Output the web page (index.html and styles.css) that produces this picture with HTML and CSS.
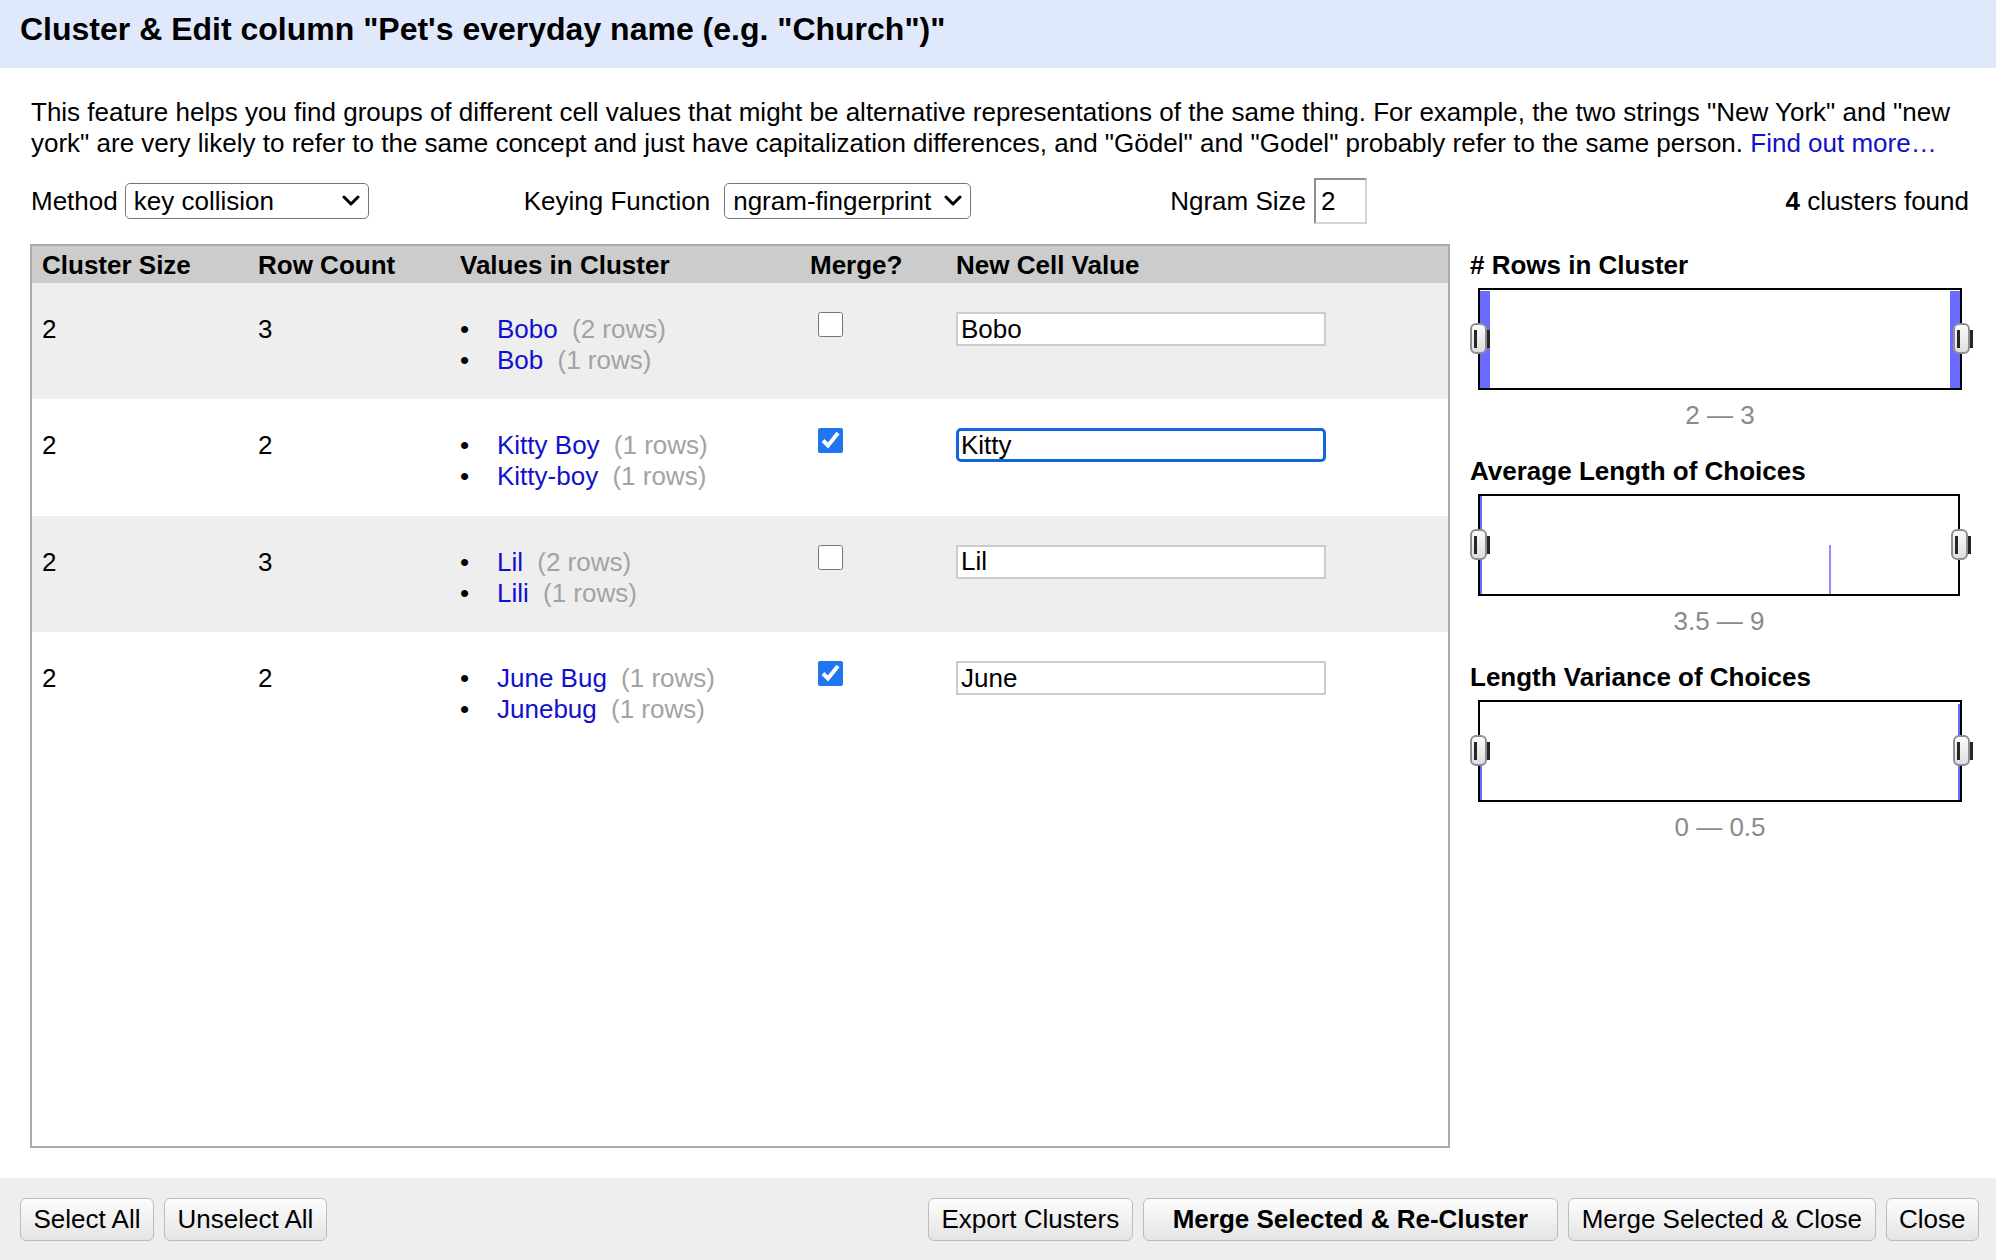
FILE: index.html
```html
<!DOCTYPE html>
<html lang="en">
<head>
<meta charset="utf-8">
<title>Cluster &amp; Edit</title>
<link rel="stylesheet" href="styles.css">
</head>
<body>
<div class="dialog">
  <header class="dlg-header">
    <h1 class="dlg-title">Cluster &amp; Edit column "Pet's everyday name (e.g. "Church")"</h1>
  </header>

  <main class="dlg-body">
    <p class="intro">This feature helps you find groups of different cell values that might be alternative representations of the same thing. For example, the two strings "New York" and "new york" are very likely to refer to the same concept and just have capitalization differences, and "Gödel" and "Godel" probably refer to the same person. <a class="link" href="#">Find out more…</a></p>

    <div class="controls">
      <div class="ctl ctl-method">
        <span class="ctl-label">Method</span>
        <span class="select-wrap">
          <select class="select select-method"><option>key collision</option></select>
          <svg class="chevron" width="18" height="12" viewBox="0 0 18 12"><path d="M2 2 L9 9 L16 2" fill="none" stroke="#000" stroke-width="3" stroke-linecap="round" stroke-linejoin="round"/></svg>
        </span>
      </div>
      <div class="ctl ctl-keying">
        <span class="ctl-label">Keying Function</span>
        <span class="select-wrap">
          <select class="select select-keying"><option>ngram-fingerprint</option></select>
          <svg class="chevron" width="18" height="12" viewBox="0 0 18 12"><path d="M2 2 L9 9 L16 2" fill="none" stroke="#000" stroke-width="3" stroke-linecap="round" stroke-linejoin="round"/></svg>
        </span>
      </div>
      <div class="ctl ctl-ngram">
        <span class="ctl-label">Ngram Size</span>
        <input class="ngram-input" type="text" value="2">
      </div>
      <div class="found"><b>4</b> clusters found</div>
    </div>

    <div class="workspace">
      <div class="table-box">
        <div class="trow thead">
          <div class="cell">Cluster Size</div>
          <div class="cell">Row Count</div>
          <div class="cell">Values in Cluster</div>
          <div class="cell">Merge?</div>
          <div class="cell">New Cell Value</div>
        </div>

        <div class="trow odd">
          <div class="cell">2</div>
          <div class="cell">3</div>
          <div class="cell">
            <ul class="values">
              <li><a class="link" href="#">Bobo</a> <span class="count">(2 rows)</span></li>
              <li><a class="link" href="#">Bob</a> <span class="count">(1 rows)</span></li>
            </ul>
          </div>
          <div class="cell"><input class="merge" type="checkbox"></div>
          <div class="cell"><input class="newval" type="text" value="Bobo"></div>
        </div>

        <div class="trow">
          <div class="cell">2</div>
          <div class="cell">2</div>
          <div class="cell">
            <ul class="values">
              <li><a class="link" href="#">Kitty Boy</a> <span class="count">(1 rows)</span></li>
              <li><a class="link" href="#">Kitty-boy</a> <span class="count">(1 rows)</span></li>
            </ul>
          </div>
          <div class="cell"><input class="merge" type="checkbox" checked></div>
          <div class="cell"><input class="newval focused" type="text" value="Kitty"></div>
        </div>

        <div class="trow odd">
          <div class="cell">2</div>
          <div class="cell">3</div>
          <div class="cell">
            <ul class="values">
              <li><a class="link" href="#">Lil</a> <span class="count">(2 rows)</span></li>
              <li><a class="link" href="#">Lili</a> <span class="count">(1 rows)</span></li>
            </ul>
          </div>
          <div class="cell"><input class="merge" type="checkbox"></div>
          <div class="cell"><input class="newval" type="text" value="Lil"></div>
        </div>

        <div class="trow">
          <div class="cell">2</div>
          <div class="cell">2</div>
          <div class="cell">
            <ul class="values">
              <li><a class="link" href="#">June Bug</a> <span class="count">(1 rows)</span></li>
              <li><a class="link" href="#">Junebug</a> <span class="count">(1 rows)</span></li>
            </ul>
          </div>
          <div class="cell"><input class="merge" type="checkbox" checked></div>
          <div class="cell"><input class="newval" type="text" value="June"></div>
        </div>
      </div>

      <aside class="facets">
        <section class="facet">
          <h3 class="facet-title"># Rows in Cluster</h3>
          <div class="hist">
            <span class="bar bar-left-wide"></span>
            <span class="bar bar-right-wide"></span>
            <span class="handle handle-left"></span>
            <span class="handle handle-right"></span>
          </div>
          <div class="range">2 — 3</div>
        </section>

        <section class="facet">
          <h3 class="facet-title">Average Length of Choices</h3>
          <div class="hist hist-narrow">
            <span class="bar line-left-full"></span>
            <span class="bar line-mid" style="left: 349px;"></span>
            <span class="handle handle-left"></span>
            <span class="handle handle-right"></span>
          </div>
          <div class="range range-narrow">3.5 — 9</div>
        </section>

        <section class="facet">
          <h3 class="facet-title">Length Variance of Choices</h3>
          <div class="hist">
            <span class="bar line-left-low"></span>
            <span class="bar line-right-full"></span>
            <span class="handle handle-left"></span>
            <span class="handle handle-right"></span>
          </div>
          <div class="range">0 — 0.5</div>
        </section>
      </aside>
    </div>
  </main>

  <footer class="dlg-footer">
    <div class="btn-group">
      <button class="btn">Select All</button>
      <button class="btn">Unselect All</button>
    </div>
    <div class="btn-group">
      <button class="btn">Export Clusters</button>
      <button class="btn btn-primary">Merge Selected &amp; Re-Cluster</button>
      <button class="btn">Merge Selected &amp; Close</button>
      <button class="btn">Close</button>
    </div>
  </footer>
</div>
</body>
</html>
```

FILE: styles.css
```css
* {
  box-sizing: border-box;
}

html, body {
  margin: 0;
  padding: 0;
  background: #fff;
}

body {
  font-family: "Liberation Sans", Arial, Helvetica, sans-serif;
  font-size: 26px;
  color: #000;
}

.dialog {
  height: 100vh;
  display: flex;
  flex-direction: column;
}

/* ---------- header ---------- */
.dlg-header {
  height: 68px;
  flex: none;
  background: #dfe9fb;
  padding: 11px 20px 0;
}

.dlg-title {
  margin: 0;
  font-size: 32px;
  font-weight: bold;
  line-height: normal;
}

/* ---------- body ---------- */
.dlg-body {
  flex: 1;
  padding: 29px 27px 0 30px;
}

.intro {
  margin: 0 0 0 1px;
  line-height: normal;
}

.link {
  color: #1111cc;
  text-decoration: none;
}

.controls {
  margin-top: 19px;
  height: 46px;
  display: flex;
  align-items: center;
  padding-left: 1px;
}

.ctl {
  display: flex;
  align-items: center;
}

.ctl-keying {
  margin-left: 155px;
}

.ctl-ngram {
  margin-left: 199px;
}

.ctl-method .select-wrap {
  margin-left: 7px;
}

.ctl-keying .select-wrap {
  margin-left: 14px;
}

.select-wrap {
  position: relative;
  display: inline-block;
}

.select {
  -webkit-appearance: none;
  appearance: none;
  font-family: inherit;
  font-size: 26px;
  color: #000;
  height: 36px;
  border: 1px solid #767676;
  border-radius: 5px;
  background: #fff;
  padding: 0 30px 0 8px;
  display: block;
}

.select-method {
  width: 244px;
}

.select-keying {
  width: 247px;
}

.chevron {
  position: absolute;
  right: 9px;
  top: 12px;
  pointer-events: none;
}

.ngram-input {
  margin-left: 8px;
  width: 53px;
  height: 46px;
  font-family: inherit;
  font-size: 26px;
  padding: 0 5px;
  border-style: solid;
  border-width: 2px;
  border-color: #8f8f8f #d4d4d4 #d4d4d4 #8f8f8f;
  background: #fff;
  color: #000;
}

.found {
  margin-left: auto;
}

/* ---------- workspace ---------- */
.workspace {
  margin-top: 20px;
  display: flex;
  align-items: flex-start;
}

.table-box {
  width: 1420px;
  height: 904px;
  flex: none;
  border: 2px solid #ababab;
  background: #fff;
}

.trow {
  display: grid;
  grid-template-columns: 216px 202px 350px 146px 1fr;
  height: 116.4px;
  padding-top: 31px;
  line-height: normal;
}

.trow.thead {
  height: 37px;
  padding-top: 4px;
  background: #cccccc;
  font-weight: bold;
}

.trow.odd {
  background: #eeeeee;
}

.cell {
  padding-left: 10px;
}

.values {
  list-style: none;
  margin: 0;
  padding: 0;
}

.values li::before {
  content: "•";
  display: inline-block;
  width: 37px;
  color: #000;
}

.count {
  color: #a3a3a3;
  margin-left: 7px;
}

.merge {
  width: 25px;
  height: 25px;
  margin: -2px 0 0 8px;
  accent-color: #1f76f0;
  display: block;
}

.newval {
  display: block;
  width: 370px;
  height: 34px;
  margin-top: -2px;
  font-family: inherit;
  font-size: 26px;
  color: #000;
  border: 2px solid #cccccc;
  padding: 0 3px;
  background: #fff;
  outline: none;
}

.newval.focused {
  border: 3px solid #1565d6;
  border-radius: 5px;
  padding: 0 2px;
}

/* ---------- facets ---------- */
.facets {
  margin-left: 20px;
  width: 499px;
  padding-top: 6px;
}

.facet {
  margin-bottom: 25px;
}

.facet-title {
  margin: 0;
  font-size: 26px;
  font-weight: bold;
  line-height: normal;
}

.hist {
  position: relative;
  margin: 7px 0 0 8px;
  width: 484px;
  height: 102px;
  border: 2px solid #000;
  background: #fff;
}

.hist-narrow {
  width: 482px;
}

.bar {
  position: absolute;
  background: #6b6bff;
}

.bar-left-wide {
  left: 0;
  top: 1px;
  bottom: 0;
  width: 10px;
}

.bar-right-wide {
  right: 0;
  top: 1px;
  bottom: 0;
  width: 10px;
}

.line-left-full {
  left: 0;
  top: 0;
  bottom: 0;
  width: 2px;
}

.line-mid {
  top: 49px;
  bottom: 0;
  width: 2px;
  background: #8d8dff;
}

.line-left-low {
  left: 0;
  top: 50%;
  bottom: 0;
  width: 2px;
}

.line-right-full {
  right: 0;
  top: 2px;
  bottom: 0;
  width: 2px;
}

.handle {
  position: absolute;
  top: 50%;
  width: 17px;
  height: 31px;
  margin-top: -16px;
  border: 2px solid #8f8f8f;
  border-radius: 6px;
  background: linear-gradient(#fbfbfb, #dedede);
}

.handle::before {
  content: "";
  position: absolute;
  left: 1.5px;
  top: 4.5px;
  width: 10px;
  height: 18px;
  border-left: 3px solid #262626;
  border-right: 3px solid #262626;
}

.handle-left {
  left: -10px;
}

.handle-right {
  right: -10px;
}

.range {
  margin: 10px 0 0 8px;
  width: 484px;
  text-align: center;
  color: #8a8a8a;
  line-height: normal;
}

.range-narrow {
  width: 482px;
}

/* ---------- footer ---------- */
.dlg-footer {
  flex: none;
  height: 82px;
  background: #eeeeee;
  padding: 20px 17px 0 20px;
  display: flex;
  justify-content: space-between;
  align-items: flex-start;
}

.btn-group {
  display: flex;
  gap: 10px;
}

.btn {
  height: 43px;
  font-family: inherit;
  font-size: 26px;
  color: #000;
  padding: 0 12.5px;
  border: 1px solid #bcbcbc;
  border-radius: 6px;
  background: linear-gradient(#fdfdfd, #e4e4e4);
}

.btn-primary {
  font-weight: bold;
  padding: 0 29px;
}
```
